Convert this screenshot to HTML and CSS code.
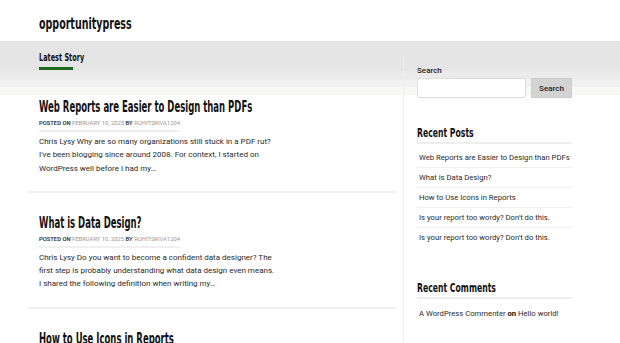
FILE: index.html
```html
<!DOCTYPE html>
<html>
<head>
<meta charset="utf-8">
<link rel="stylesheet" href="styles.css">
</head>
<body>
<header class="site-header">
  <div class="site-title">opportunitypress</div>
</header>
<div class="layout">
  <main class="content">
    <div class="section-tab"><div class="tab-label">Latest Story</div></div>
    <article class="post">
      <h2 class="post-title">Web Reports are Easier to Design than PDFs</h2>
      <div class="post-meta"><span class="meta-dark">Posted on</span> <span class="meta-light">February 10, 2025</span> <span class="meta-dark">by</span> <span class="meta-light">rohitsriva1204</span></div>
      <p class="excerpt">Chris Lysy Why are so many organizations still stuck in a PDF rut?<br>I've been blogging since around 2008. For context, I started on<br>WordPress well before I had my…</p>
    </article>
    <article class="post">
      <h2 class="post-title">What is Data Design?</h2>
      <div class="post-meta"><span class="meta-dark">Posted on</span> <span class="meta-light">February 10, 2025</span> <span class="meta-dark">by</span> <span class="meta-light">rohitsriva1204</span></div>
      <p class="excerpt">Chris Lysy Do you want to become a confident data designer? The<br>first step is probably understanding what data design even means.<br>I shared the following definition when writing my…</p>
    </article>
    <article class="post">
      <h2 class="post-title">How to Use Icons in Reports</h2>
    </article>
  </main>
  <div class="divider"></div>
  <aside class="sidebar">
    <div class="search-widget">
      <label class="search-label">Search</label>
      <div class="search-row">
        <input class="search-input" type="text">
        <button class="search-btn">Search</button>
      </div>
    </div>
    <div class="widget">
      <h3 class="widget-title"><span class="widget-title-text">Recent Posts</span></h3>
      <ul class="widget-list">
        <li>Web Reports are Easier to Design than PDFs</li>
        <li>What is Data Design?</li>
        <li>How to Use Icons in Reports</li>
        <li>Is your report too wordy? Don't do this.</li>
        <li>Is your report too wordy? Don't do this.</li>
      </ul>
    </div>
    <div class="widget comments">
      <h3 class="widget-title"><span class="widget-title-text">Recent Comments</span></h3>
      <ul class="widget-list">
        <li>A WordPress Commenter <b>on</b> Hello world!</li>
      </ul>
    </div>
  </aside>
</div>
</body>
</html>
```
FILE: styles.css
```css
* { box-sizing: border-box; }
html, body { margin: 0; padding: 0; }
body {
  background: #fff;
  font-family: Roboto, "Liberation Sans", sans-serif;
  color: #333;
}
.site-header {
  height: 41px;
  padding-left: 39px;
  display: flex;
  align-items: center;
}
.site-title {
  font-family: "DejaVu Sans Condensed", "DejaVu Sans", sans-serif;
  font-weight: 700;
  font-size: 16px;
  color: #111;
  margin-top: 5px;
  transform: scaleX(0.66);
  transform-origin: left center;
}
.layout {
  display: grid;
  grid-template-columns: 375px 1px 168px;
  padding-left: 28px;
  background:
    linear-gradient(to bottom, #e5e5e5 0, #e5e5e5 30px, #ebebeb 30px, #ebebeb 38px, #f1f1f1 38px, #f1f1f1 46px, #f8f8f6 46px, #f8f8f6 54px, #fff 54px) no-repeat;
  background-size: 100% 60px;
}
.content { padding-left: 11px; padding-right: 7px; }
.divider {
  margin-top: 14px;
  background: #eee;
  width: 1px;
}
.sidebar { padding-left: 13px; padding-top: 25px; }
.section-tab {
  height: 58px;
  padding-top: 10px;
}
.section-tab::after {
  content: "";
  display: block;
  width: 34px;
  height: 3px;
  margin-top: 3px;
  background: #1c6b1c;
}
.tab-label {
  font-family: "DejaVu Sans Condensed", "DejaVu Sans", sans-serif;
  font-weight: 700;
  font-size: 11px;
  line-height: 13px;
  color: #111;
  transform: scaleX(0.66);
  transform-origin: left center;
}
.post {
  margin-left: -11px;
  padding-left: 11px;
  border-bottom: 2px solid #f0f0f0;
  padding-bottom: 16px;
  margin-bottom: 22px;
}
.post-title {
  font-family: "DejaVu Sans Condensed", "DejaVu Sans", sans-serif;
  font-weight: 700;
  font-size: 15px;
  color: #111;
  margin: -1px 0 3px;
  line-height: 18px;
  white-space: nowrap;
  transform: scaleX(0.63);
  transform-origin: left center;
}
.post-meta {
  font-size: 5.85px;
  line-height: 8px;
  text-transform: uppercase;
  width: 141px;
  padding-bottom: 3px;
  border-bottom: 2px solid #f0f0f0;
  margin-bottom: 3px;
  white-space: nowrap;
}
.meta-dark { color: #222; font-weight: 500; }
.meta-light { color: #999; }
.excerpt {
  margin: 0;
  font-size: 8px;
  line-height: 13.3px;
  color: #2a2a2a;
}
.search-label {
  display: block;
  font-size: 8px;
  font-weight: 500;
  color: #222;
  margin-bottom: 3px;
}
.search-row { display: flex; gap: 5px; }
.search-input {
  width: 109px;
  height: 20px;
  border: 1px solid #ddd;
  border-radius: 2px;
  background: #fff;
  margin: 0;
}
.search-btn {
  width: 41px;
  height: 20px;
  border: 1px solid #ccc;
  background: #d3d3d3;
  font-family: Roboto, sans-serif;
  font-size: 8px;
  font-weight: 500;
  color: #222;
  padding: 0;
  margin: 0;
}
.widget { margin-top: 25px; width: 155px; }
.widget.comments { margin-top: 31px; }
.comments .widget-list { padding-top: 5.5px; }
.widget-title {
  margin: 0;
  padding-bottom: 3px;
  border-bottom: 2px solid #eee;
  line-height: 16px;
  height: 21px;
}
.widget-title-text {
  display: inline-block;
  font-family: "DejaVu Sans Condensed", "DejaVu Sans", sans-serif;
  font-weight: 700;
  font-size: 13px;
  color: #111;
  white-space: nowrap;
  transform: scaleX(0.66);
  transform-origin: left center;
}
.widget-list { list-style: none; margin: 0; padding: 3.5px 0 0; }
.widget-list li {
  font-size: 7.7px;
  color: #2a2a2a;
  padding: 5px 2px;
  line-height: 9px;
  border-bottom: 1px solid #f0f0f0;
  white-space: nowrap;
}
.widget-list li:last-child { border-bottom: none; }
.widget-list b { color: #111; font-weight: 700; }
```
